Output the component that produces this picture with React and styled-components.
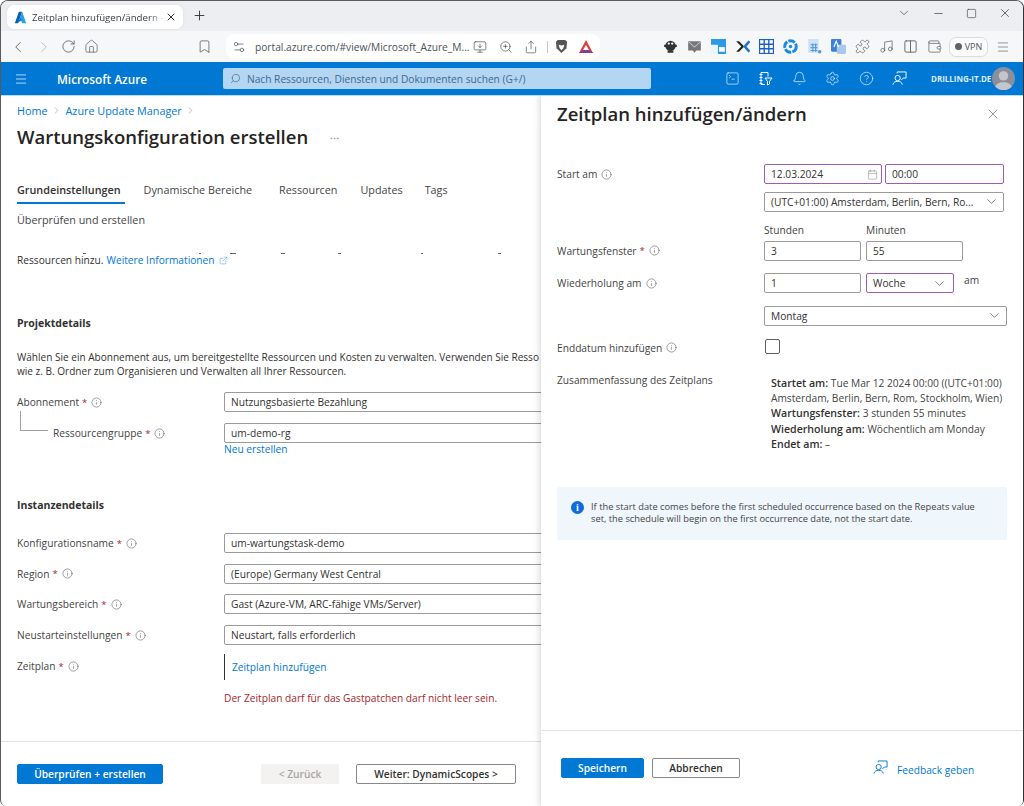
import React from "react";
import styled, { createGlobalStyle } from "styled-components";
import {
  Bell,
  Bookmark,
  Calendar,
  ChevronDown,
  ChevronLeft,
  ChevronRight,
  CircleHelp,
  Columns2,
  ExternalLink,
  Home,
  Info,
  Menu,
  Minus,
  Music,
  MoreHorizontal,
  Plus,
  Puzzle,
  RotateCw,
  Search,
  Settings,
  Settings2,
  Share,
  Square,
  SquareTerminal,
  Wallet,
  X,
  ZoomIn,
  MonitorDown,
} from "lucide-react";

const GlobalStyle = createGlobalStyle`
  html, body { margin: 0; padding: 0; background: #fff; }
  body { font-family: "Open Sans", "Liberation Sans", sans-serif; font-size: 10.2px; color: #323130; }
  * { box-sizing: border-box; }
`;

const Windowframe = styled.div`
  width: 1024px;
  height: 806px;
  display: flex;
  flex-direction: column;
  overflow: hidden;
  border: 1px solid #5a5a5a;
  border-right-color: #333;
  border-bottom: 0;
  border-radius: 8px 8px 6px 6px;
  background: #fff;
`;

const TabStrip = styled.div`
  height: 30px;
  flex: none;
  background: #eceef2;
  display: flex;
  align-items: flex-start;
  padding: 4px 0 0 6px;
`;

const Tab = styled.div`
  width: 176px;
  height: 24px;
  background: #fff;
  border-radius: 7px;
  display: flex;
  align-items: center;
  padding: 0 4px 0 7px;
  color: #3c4043;
  font-size: 9.7px;
  white-space: nowrap;
  box-shadow: 0 0 3px rgba(0, 0, 0, 0.08);
`;

const TabTitle = styled.span`
  margin-left: 5px;
  width: 133px;
  -webkit-mask-image: linear-gradient(90deg, #000 88%, transparent);
`;

const NewTab = styled.div`
  margin: 3px 0 0 9px;
  color: #333;
  display: flex;
`;

const WindowControls = styled.div`
  margin-left: auto;
  display: flex;
  align-items: center;
  gap: 21px;
  padding: 1px 11px 0 0;
  color: #444;
`;

const Toolbar = styled.div`
  height: 31px;
  flex: none;
  background: #f6f7f9;
  display: flex;
  align-items: center;
  color: #5f6368;
`;

const NavIcons = styled.div`
  display: flex;
  align-items: center;
  gap: 8px;
  padding-left: 8px;
  width: 215px;
`;

const BookmarkSlot = styled.span`
  margin-left: 90px;
  display: flex;
`;

const UrlPill = styled.div`
  margin-left: 10px;
  width: 374px;
  height: 25px;
  background: #fff;
  border-radius: 8px;
  display: flex;
  align-items: center;
  padding-left: 6px;
  font-size: 10.2px;
  color: #4d5156;
`;

const UrlText = styled.span`
  margin-left: 9px;
  width: 218px;
  white-space: nowrap;
`;

const UrlIcons = styled.span`
  display: flex;
  align-items: center;
  gap: 11.5px;
`;

const UrlSeparator = styled.span`
  width: 1px;
  height: 12px;
  background: #c8c8c8;
  margin: 0 7px 0 9px;
`;

const UrlGap = styled.span`
  width: 11px;
`;

const ExtensionRow = styled.div`
  margin-left: 63px;
  display: flex;
  align-items: center;
  gap: 9px;
  svg {
    width: 15px;
    height: 15px;
  }
`;

const VpnPill = styled.div`
  margin-left: 7px;
  width: 39px;
  height: 20px;
  border: 1px solid #dadce0;
  border-radius: 7px;
  background: #fbfbfc;
  display: flex;
  align-items: center;
  justify-content: center;
  gap: 3px;
  font-size: 9px;
  color: #555;
`;

const VpnDot = styled.span`
  width: 7px;
  height: 7px;
  border-radius: 50%;
  background: #5f6368;
`;

const ToolbarEnd = styled.div`
  margin-left: 8px;
  display: flex;
  color: #777;
`;

const AzureBar = styled.header`
  height: 33px;
  flex: none;
  background: #0078d4;
  display: flex;
  align-items: center;
  color: #fff;
  box-shadow: 0 1px 0 #b9dcf5;
  position: relative;
  z-index: 3;
`;

const Burger = styled.div`
  margin-left: 13px;
  display: flex;
`;

const Brand = styled.div`
  margin-left: 29px;
  width: 166px;
  font-size: 11.8px;
  font-weight: 600;
  white-space: nowrap;
`;

const SearchBox = styled.div`
  width: 428px;
  height: 21px;
  background: #b3d6f2;
  border-radius: 2px;
  display: flex;
  align-items: center;
  padding-left: 7px;
  gap: 6px;
  color: #41688f;
  font-size: 10.2px;
`;

const BarIcons = styled.div`
  margin-left: 74px;
  display: flex;
  align-items: center;
  gap: 18.4px;
`;

const Tenant = styled.div`
  margin-left: 24px;
  font-size: 8px;
  font-weight: 700;
  width: 60px;
  white-space: nowrap;
  color: #dcecf9;
`;

const Avatar = styled.div`
  width: 23px;
  height: 23px;
  border-radius: 50%;
  background: #8a8f9c;
  margin-left: 1px;
  display: flex;
  overflow: hidden;
`;

const Workspace = styled.div`
  flex: 1;
  min-height: 0;
  display: flex;
`;

const Blade = styled.main`
  width: 540px;
  flex: none;
  display: flex;
  flex-direction: column;
  overflow: hidden;
`;

const BladeBody = styled.div`
  flex: 1;
  padding-left: 16px;
  white-space: nowrap;
`;

const Breadcrumb = styled.nav`
  height: 31px;
  margin-bottom: 1px;
  display: flex;
  align-items: center;
  gap: 3.5px;
  color: #0078d4;
  font-size: 10.8px;
`;

const CrumbArrow = styled(ChevronRight)`
  color: #777;
`;

const PageTitle = styled.h1`
  margin: 0;
  height: 20px;
  display: flex;
  align-items: center;
  font-size: 18.5px;
  line-height: 20px;
  font-weight: 600;
  color: #252423;
  gap: 21px;
`;

const TitleDots = styled(MoreHorizontal)`
  color: #777;
  margin-top: 2px;
`;

const TabRow = styled.div`
  margin-top: ${(p) => p.$top}px;
  display: flex;
  height: ${(p) => p.$height}px;
`;

const FormTab = styled.div`
  font-size: 10.8px;
  display: flex;
  align-items: center;
  height: 100%;
  margin-left: ${(p) => p.$left || 0}px;
  color: ${(p) => (p.$active ? "#323130" : "#444")};
  font-weight: ${(p) => (p.$active ? 600 : 400)};
  padding-right: ${(p) => (p.$active ? 4 : 0)}px;
  border-bottom: 2px solid ${(p) => (p.$active ? "#0078d4" : "transparent")};
`;

const ClippedTails = styled.div`
  margin-top: 23px;
  height: 2px;
  display: flex;
`;

const Tail = styled.span`
  margin-left: ${(p) => p.$gap}px;
  width: ${(p) => p.$width}px;
  height: 1px;
  background: #666;
`;

const IntroLine = styled.div`
  margin-top: -3px;
  height: 16px;
  display: flex;
  align-items: center;
  gap: 3px;
`;

const Link = styled.a`
  color: #0078d4;
  display: inline-flex;
  align-items: center;
  gap: 4px;
`;

const SectionTitle = styled.h2`
  margin: ${(p) => p.$top}px 0 0;
  height: 14px;
  line-height: 14px;
  font-size: 10.5px;
  font-weight: 700;
  color: #323130;
`;

const Paragraph = styled.p`
  margin: 20px 0 0;
  font-size: 10.05px;
  line-height: 14px;
`;

const FieldRow = styled.div`
  display: grid;
  grid-template-columns: 207px 400px;
  margin-top: ${(p) => p.$top}px;
  align-items: center;
`;

const RowLabel = styled.label`
  display: flex;
  align-items: center;
  gap: 4px;
  color: #444;
`;

const Req = styled.span`
  color: #a4262c;
  margin-left: -1px;
  font-size: 9.5px;
`;

const TreeCorner = styled.span`
  width: 28px;
  height: 20px;
  margin: -24px 1px 0 3px;
  border-left: 1px solid #a0a0a0;
  border-bottom: 1px solid #a0a0a0;
`;

const Field = styled.div`
  height: ${(p) => p.$h || 20}px;
  width: ${(p) => (p.$w ? `${p.$w}px` : "100%")};
  flex: none;
  border: 1px solid ${(p) => (p.$focus ? "#a05bb8" : "#9a9a9a")};
  border-radius: 2px;
  background: #fff;
  display: flex;
  align-items: center;
  justify-content: space-between;
  padding: 0 ${(p) => p.$pr ?? 7}px 0 6px;
  color: #323130;
  white-space: nowrap;
`;

const CreateNew = styled.div`
  margin-left: 207px;
  height: 13px;
  line-height: 13px;
`;

const ScheduleRow = styled.div`
  margin-top: 9px;
  display: grid;
  grid-template-columns: 207px 1fr;
`;

const ScheduleLabel = styled(RowLabel)`
  height: 24px;
`;

const ScheduleLink = styled.div`
  height: 26px;
  border-left: 1px solid #323130;
  padding-left: 7px;
  display: flex;
  align-items: center;
`;

const ErrorText = styled.div`
  margin: 11px 0 0 207px;
  height: 14px;
  line-height: 14px;
  color: #a4262c;
`;

const BladeFooter = styled.footer`
  height: 65px;
  flex: none;
  border-top: 1px solid #e1e1e1;
  padding: 22px 0 0 16px;
  display: flex;
  align-items: flex-start;
`;

const Button = styled.button`
  height: 20px;
  width: ${(p) => p.$w}px;
  margin-left: ${(p) => p.$left || 0}px;
  flex: none;
  padding: 0;
  border-radius: 2px;
  font: 600 10.2px "Open Sans", "Liberation Sans", sans-serif;
  background: ${(p) => (p.$primary ? "#0078d4" : p.$disabled ? "#f3f2f1" : "#fff")};
  color: ${(p) => (p.$primary ? "#fff" : p.$disabled ? "#a8a6a4" : "#323130")};
  border: 1px solid ${(p) => (p.$primary ? "#0078d4" : p.$disabled ? "#f3f2f1" : "#8a8886")};
`;

const Panel = styled.aside`
  width: 482px;
  flex: none;
  display: flex;
  flex-direction: column;
  background: #fff;
  box-shadow: -2px 0 6px rgba(0, 0, 0, 0.14);
  position: relative;
  z-index: 2;
`;

const PanelBody = styled.div`
  flex: 1;
  padding-left: 16px;
`;

const PanelHead = styled.div`
  height: 37px;
  display: flex;
  align-items: center;
  justify-content: space-between;
  padding-right: 22px;
`;

const PanelTitle = styled.h2`
  margin: 0;
  font-size: 18.5px;
  font-weight: 600;
  color: #252423;
`;

const CloseIcon = styled(X)`
  color: #666;
`;

const PanelRow = styled.div`
  display: grid;
  grid-template-columns: 207px 1fr;
  margin-top: ${(p) => p.$top}px;
`;

const PanelLabel = styled(RowLabel)`
  height: ${(p) => p.$h || 20}px;
  margin-top: ${(p) => p.$top || 0}px;
  align-self: ${(p) => (p.$end ? "end" : "start")};
`;

const FieldLine = styled.div`
  display: flex;
  gap: ${(p) => p.$gap ?? 5}px;
  align-items: center;
  margin-top: ${(p) => p.$top || 0}px;
`;

const UnitColumn = styled.div`
  width: ${(p) => p.$w}px;
  flex: none;
`;

const UnitLabel = styled.div`
  height: 14px;
  line-height: 14px;
  margin-bottom: 4px;
  color: #444;
`;

const TrailingWord = styled.span`
  margin: -6px 0 0 5px;
  color: #444;
`;

const Checkbox = styled.div`
  width: 15px;
  height: 15px;
  margin-left: 1px;
  border: 1px solid #605e5c;
  border-radius: 2px;
  background: #fff;
`;

const Summary = styled.div`
  margin: 3px 0 0 7px;
  font-size: 10.2px;
  line-height: 15.2px;
  color: #444;
  white-space: nowrap;
`;

const SummaryKey = styled.strong`
  font-weight: 600;
  font-size: 10.6px;
  line-height: 1;
  color: #323130;
`;

const InfoBox = styled.div`
  margin-top: 35px;
  width: 450px;
  height: 53px;
  background: #eff6fc;
  border-radius: 2px;
  display: flex;
  align-items: flex-start;
  padding: 14px 14px 0 14px;
  gap: 7px;
  line-height: 12px;
  font-size: 9.3px;
  color: #444;
  white-space: nowrap;
`;

const InfoDot = styled.span`
  width: 13px;
  height: 13px;
  flex: none;
  border-radius: 50%;
  background: #0f6cd9;
  color: #fff;
  font: 700 10px/13px "Liberation Serif", serif;
  text-align: center;
`;

const PanelFooter = styled.footer`
  height: 76px;
  flex: none;
  border-top: 1px solid #e1e1e1;
  padding: 27px 0 0 20px;
  display: flex;
  align-items: flex-start;
`;

const FeedbackLink = styled(Link)`
  margin: 2px 0 0 133px;
  gap: 9px;
  height: 20px;
  svg {
    transform: translateY(-3px);
  }
`;

const Hint = () => <Info size={11} strokeWidth={1.2} color="#555" />;

const AzureLogo = () => (
  <svg width="13" height="13" viewBox="0 0 16 16">
    <path d="M6 1h4L5 15H1z" fill="#0b5ea8" />
    <path d="M10 1l5 14h-5L7.500 8z" fill="#2a9fe8" />
    <path d="M3.500 15l6-3.500L8 8z" fill="#0a78d0" />
  </svg>
);

const BraveLogo = () => (
  <svg width="13" height="15" viewBox="0 0 14 16">
    <path d="M3 1h8l2 2-.7 7L7 15 1.700 10 1 3z" fill="#555" />
    <path d="M4 6l3 1 3-1-1 4-2 2-2-2z" fill="#fff" />
  </svg>
);

const BatLogo = () => (
  <svg width="14" height="13" viewBox="0 0 14 13">
    <path d="M7 0l7 13H0z" fill="#d9433c" />
    <path d="M7 5l3 5H4z" fill="#fff" />
    <path d="M0 13l4-3h6l4 3z" fill="#7b3fa0" />
  </svg>
);

const ExtensionDrawings = [
  <svg key="a" viewBox="0 0 13 13"><circle cx="6.500" cy="6" r="4.500" fill="#333" /><path d="M1 6h11M4 11h5" stroke="#333" strokeWidth="2" /><circle cx="5" cy="4" r="1" fill="#fff" /><circle cx="8" cy="4" r="1" fill="#fff" /></svg>,
  <svg key="b" viewBox="0 0 13 13"><path d="M1 2h11v8H8l-1.500 2L5 10H1z" fill="#777" /><path d="M1 2l5.500 5L12 2" stroke="#bbb" fill="none" /></svg>,
  <svg key="c" viewBox="0 0 13 13"><rect width="13" height="13" fill="#2b9be8" /><rect x="0" y="5" width="6" height="8" fill="#fff" opacity=".9" /><rect x="7" y="7" width="5" height="4" fill="#fff" /></svg>,
  <svg key="d" viewBox="0 0 13 13"><path d="M1 2l4.500 4.500L1 11h2.500L8 6.500 3.500 2z" fill="#222" /><path d="M12.500 2L8.500 6.500l4 4.500" stroke="#1b75d0" strokeWidth="2.200" fill="none" /></svg>,
  <svg key="e" viewBox="0 0 13 13"><rect x=".5" y=".5" width="12" height="12" fill="#fff" stroke="#1c5fc4" /><path d="M4.500 0v13M8.500 0v13M0 4.500h13M0 8.500h13" stroke="#1c5fc4" strokeWidth="1.200" /></svg>,
  <svg key="f" viewBox="0 0 13 13"><circle cx="6.500" cy="6.500" r="5" fill="none" stroke="#1a8ae0" strokeWidth="2.500" strokeDasharray="6 1" /><circle cx="6.500" cy="6.500" r="1.500" fill="#1a8ae0" /></svg>,
  <svg key="g" viewBox="0 0 13 13"><rect x="1" y="0" width="9" height="12" fill="#cfe2f3" /><path d="M3 5h6M3 7.500h6M3 10h6M5 4v7M7.500 4v7" stroke="#5a9bd5" /><circle cx="11" cy="11" r="1.500" fill="#5a9bd5" /></svg>,
  <svg key="h" viewBox="0 0 13 13"><rect x="0" y="0" width="9" height="11" rx="1" fill="#3b82d8" /><rect x="5" y="5" width="8" height="8" rx="1" fill="#a8c8ec" /><path d="M2.500 7l2-5 2 5" stroke="#fff" fill="none" /></svg>,
];

const DirectoryIcon = () => (
  <svg width="15" height="15" viewBox="0 0 15 15" fill="none" stroke="#fff" strokeWidth="1">
    <path d="M3 1.500h7v4M3 1.500v12h4M1.500 3.500h3M1.500 6.500h3M1.500 9.500h3M1.500 12.500h3" />
    <path d="M7 7h7l-2.500 3.500V13l-2 1v-3.500z" />
  </svg>
);

const FeedbackIcon = ({ color, size }) => (
  <svg width={size} height={size} viewBox="0 0 16 16" fill="none" stroke={color} strokeWidth="1">
    <circle cx="6" cy="7.500" r="2.800" />
    <path d="M1 14.500c.5-2.500 2.500-3.500 5-3.500s4.500 1 5 3.500" />
    <path d="M5.500 2.500V1h9.500v6.500h-3L10 9.500" />
  </svg>
);

const AvatarFigure = () => (
  <svg width="23" height="23" viewBox="0 0 22 22">
    <circle cx="11" cy="8.500" r="4.500" fill="#c4c6cc" />
    <path d="M2 22c1-6 5-7.500 9-7.500s8 1.500 9 7.500z" fill="#c4c6cc" />
  </svg>
);

const DownArrow = () => <ChevronDown size={15} strokeWidth={1.1} color="#444" />;

const tails = [
  [66, 3], [113, 2], [29, 6], [45, 4], [53, 3], [80, 2], [75, 3],
];

const tabsFirstRow = [
  { label: "Grundeinstellungen", active: true, left: 0 },
  { label: "Dynamische Bereiche", left: 19 },
  { label: "Ressourcen", left: 27 },
  { label: "Updates", left: 23 },
  { label: "Tags", left: 22 },
];

const projectRows = [
  { label: "Konfigurationsname", value: "um-wartungstask-demo", top: 21 },
  { label: "Region", value: "(Europe) Germany West Central", top: 10.7 },
  { label: "Wartungsbereich", value: "Gast (Azure-VM, ARC-fähige VMs/Server)", top: 10.7 },
  { label: "Neustarteinstellungen", value: "Neustart, falls erforderlich", top: 10.7 },
];

export default function App() {
  return (
    <>
      <GlobalStyle />
      <Windowframe>
        <TabStrip>
          <Tab>
            <AzureLogo />
            <TabTitle>Zeitplan hinzufügen/ändern - M</TabTitle>
            <X size={12} strokeWidth={2} color="#333" />
          </Tab>
          <NewTab>
            <Plus size={15} strokeWidth={1.5} />
          </NewTab>
          <WindowControls>
            <ChevronDown size={14} strokeWidth={1.2} />
            <Minus size={13} strokeWidth={1.3} />
            <Square size={11} strokeWidth={1.4} />
            <X size={14} strokeWidth={1.3} />
          </WindowControls>
        </TabStrip>
        <Toolbar>
          <NavIcons>
            <ChevronLeft size={18} strokeWidth={1.3} />
            <ChevronRight size={18} strokeWidth={1.3} color="#bbb" />
            <RotateCw size={15} strokeWidth={1.4} />
            <Home size={15} strokeWidth={1.2} />
            <BookmarkSlot>
              <Bookmark size={15} strokeWidth={1.3} />
            </BookmarkSlot>
          </NavIcons>
          <UrlPill>
            <Settings2 size={14} strokeWidth={1.2} />
            <UrlText>portal.azure.com/#view/Microsoft_Azure_M...</UrlText>
            <UrlIcons>
              <MonitorDown size={14} strokeWidth={1.2} />
              <ZoomIn size={14} strokeWidth={1.2} />
              <Share size={14} strokeWidth={1.2} />
            </UrlIcons>
            <UrlSeparator />
            <BraveLogo />
            <UrlGap />
            <BatLogo />
          </UrlPill>
          <ExtensionRow>
            {ExtensionDrawings}
            <Puzzle strokeWidth={1.2} />
            <Music strokeWidth={1.2} />
            <Columns2 strokeWidth={1.5} />
            <Wallet strokeWidth={1.2} />
          </ExtensionRow>
          <VpnPill>
            <VpnDot />
            VPN
          </VpnPill>
          <ToolbarEnd>
            <Menu size={14} strokeWidth={1.3} />
          </ToolbarEnd>
        </Toolbar>
        <AzureBar>
          <Burger>
            <Menu size={14} strokeWidth={1.2} />
          </Burger>
          <Brand>Microsoft Azure</Brand>
          <SearchBox>
            <Search size={11} strokeWidth={1.4} style={{ transform: "scaleX(-1)" }} />
            Nach Ressourcen, Diensten und Dokumenten suchen (G+/)
          </SearchBox>
          <BarIcons>
            <SquareTerminal size={15} strokeWidth={1} />
            <DirectoryIcon />
            <Bell size={15} strokeWidth={1} />
            <Settings size={15} strokeWidth={1} />
            <CircleHelp size={15} strokeWidth={1} />
            <FeedbackIcon color="#fff" size={15} />
          </BarIcons>
          <Tenant>DRILLING-IT.DE</Tenant>
          <Avatar>
            <AvatarFigure />
          </Avatar>
        </AzureBar>
        <Workspace>
          <Blade>
            <BladeBody>
              <Breadcrumb>
                Home
                <CrumbArrow size={11} strokeWidth={1} />
                Azure Update Manager
                <CrumbArrow size={11} strokeWidth={1} />
              </Breadcrumb>
              <PageTitle>
                Wartungskonfiguration erstellen
                <TitleDots size={11} strokeWidth={1} />
              </PageTitle>
              <TabRow $top={29} $height={28}>
                {tabsFirstRow.map((tab) => (
                  <FormTab key={tab.label} $active={tab.active} $left={tab.left}>
                    {tab.label}
                  </FormTab>
                ))}
              </TabRow>
              <TabRow $top={6} $height={20}>
                <FormTab>Überprüfen und erstellen</FormTab>
              </TabRow>
              <ClippedTails>
                {tails.map(([gap, width], i) => (
                  <Tail key={i} $gap={gap} $width={width} />
                ))}
              </ClippedTails>
              <IntroLine>
                Ressourcen hinzu.
                <Link>
                  Weitere Informationen
                  <ExternalLink size={9} strokeWidth={1} />
                </Link>
              </IntroLine>
              <SectionTitle $top={48}>Projektdetails</SectionTitle>
              <Paragraph>
                Wählen Sie ein Abonnement aus, um bereitgestellte Ressourcen und Kosten zu verwalten. Verwenden Sie Resso
                <br />
                wie z. B. Ordner zum Organisieren und Verwalten all Ihrer Ressourcen.
              </Paragraph>
              <FieldRow $top={14}>
                <RowLabel>
                  Abonnement <Req>*</Req> <Hint />
                </RowLabel>
                <Field>Nutzungsbasierte Bezahlung</Field>
              </FieldRow>
              <FieldRow $top={11}>
                <RowLabel>
                  <TreeCorner />
                  Ressourcengruppe <Req>*</Req> <Hint />
                </RowLabel>
                <Field>um-demo-rg</Field>
              </FieldRow>
              <CreateNew>
                <Link>Neu erstellen</Link>
              </CreateNew>
              <SectionTitle $top={42}>Instanzendetails</SectionTitle>
              {projectRows.map((row) => (
                <FieldRow key={row.label} $top={row.top}>
                  <RowLabel>
                    {row.label} <Req>*</Req> <Hint />
                  </RowLabel>
                  <Field>{row.value}</Field>
                </FieldRow>
              ))}
              <ScheduleRow>
                <ScheduleLabel>
                  Zeitplan <Req>*</Req> <Hint />
                </ScheduleLabel>
                <ScheduleLink>
                  <Link>Zeitplan hinzufügen</Link>
                </ScheduleLink>
              </ScheduleRow>
              <ErrorText>Der Zeitplan darf für das Gastpatchen darf nicht leer sein.</ErrorText>
            </BladeBody>
            <BladeFooter>
              <Button $primary $w={146}>Überprüfen + erstellen</Button>
              <Button $disabled $w={78} $left={98}>&lt; Zurück</Button>
              <Button $w={160} $left={17}>Weiter: DynamicScopes &gt;</Button>
            </BladeFooter>
          </Blade>
          <Panel>
            <PanelBody>
              <PanelHead>
                <PanelTitle>Zeitplan hinzufügen/ändern</PanelTitle>
                <CloseIcon size={16} strokeWidth={1} />
              </PanelHead>
              <PanelRow $top={32}>
                <PanelLabel>
                  Start am <Hint />
                </PanelLabel>
                <div>
                  <FieldLine $gap={3}>
                    <Field $w={118} $focus $pr={3}>
                      12.03.2024
                      <Calendar size={11} strokeWidth={1} color="#777" />
                    </Field>
                    <Field $w={119} $focus>00:00</Field>
                  </FieldLine>
                  <FieldLine $top={8}>
                    <Field $w={240} $h={19.5} $pr={4}>
                      (UTC+01:00) Amsterdam, Berlin, Bern, Ro...
                      <DownArrow />
                    </Field>
                  </FieldLine>
                </div>
              </PanelRow>
              <PanelRow $top={11}>
                <PanelLabel $end>
                  Wartungsfenster <Req>*</Req> <Hint />
                </PanelLabel>
                <FieldLine>
                  <UnitColumn $w={97}>
                    <UnitLabel>Stunden</UnitLabel>
                    <Field>3</Field>
                  </UnitColumn>
                  <UnitColumn $w={97}>
                    <UnitLabel>Minuten</UnitLabel>
                    <Field>55</Field>
                  </UnitColumn>
                </FieldLine>
              </PanelRow>
              <PanelRow $top={12.5}>
                <PanelLabel>
                  Wiederholung am <Hint />
                </PanelLabel>
                <FieldLine>
                  <Field $w={97} $h={19.5}>1</Field>
                  <Field $w={88} $h={19.5} $focus $pr={6}>
                    Woche
                    <DownArrow />
                  </Field>
                  <TrailingWord>am</TrailingWord>
                </FieldLine>
              </PanelRow>
              <PanelRow $top={13}>
                <span />
                <FieldLine>
                  <Field $w={243} $h={19.5} $pr={4}>
                    Montag
                    <DownArrow />
                  </Field>
                </FieldLine>
              </PanelRow>
              <PanelRow $top={13}>
                <PanelLabel $h={14} $top={2}>
                  Enddatum hinzufügen <Hint />
                </PanelLabel>
                <Checkbox />
              </PanelRow>
              <PanelRow $top={18.5}>
                <PanelLabel $h={14}>Zusammenfassung des Zeitplans</PanelLabel>
                <Summary>
                  <SummaryKey>Startet am:</SummaryKey> Tue Mar 12 2024 00:00 ((UTC+01:00)
                  <br />
                  Amsterdam, Berlin, Bern, Rom, Stockholm, Wien)
                  <br />
                  <SummaryKey>Wartungsfenster:</SummaryKey> 3 stunden 55 minutes
                  <br />
                  <SummaryKey>Wiederholung am:</SummaryKey> Wöchentlich am Monday
                  <br />
                  <SummaryKey>Endet am:</SummaryKey> –
                </Summary>
              </PanelRow>
              <InfoBox>
                <InfoDot>i</InfoDot>
                <span>
                  If the start date comes before the first scheduled occurrence based on the Repeats value
                  <br />
                  set, the schedule will begin on the first occurrence date, not the start date.
                </span>
              </InfoBox>
            </PanelBody>
            <PanelFooter>
              <Button $primary $w={83}>Speichern</Button>
              <Button $w={88} $left={8}>Abbrechen</Button>
              <FeedbackLink>
                <FeedbackIcon color="#0078d4" size={15} />
                Feedback geben
              </FeedbackLink>
            </PanelFooter>
          </Panel>
        </Workspace>
      </Windowframe>
    </>
  );
}
